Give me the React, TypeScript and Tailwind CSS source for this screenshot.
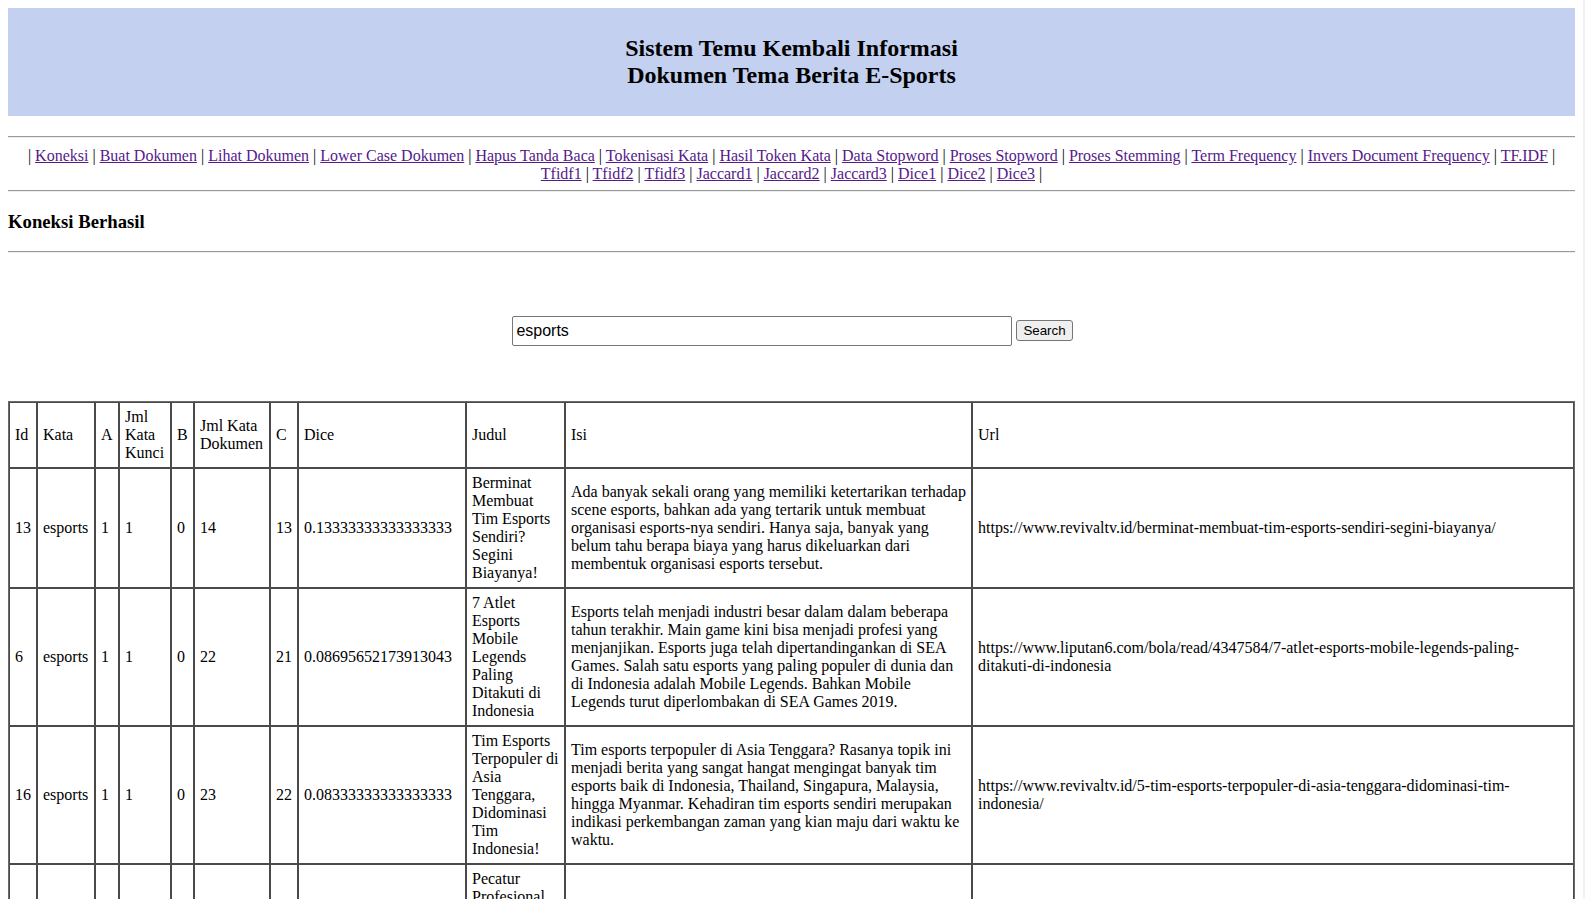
import React from "react";

type Row = {
  id: string;
  kata: string;
  a: string;
  jkk: string;
  b: string;
  jkd: string;
  c: string;
  dice: string;
  judul: string;
  isi: string;
  url: string;
};

const rows: Row[] = [
  {
    id: "13",
    kata: "esports",
    a: "1",
    jkk: "1",
    b: "0",
    jkd: "14",
    c: "13",
    dice: "0.13333333333333333",
    judul: "Berminat Membuat Tim Esports Sendiri? Segini Biayanya!",
    isi: "Ada banyak sekali orang yang memiliki ketertarikan terhadap scene esports, bahkan ada yang tertarik untuk membuat organisasi esports-nya sendiri. Hanya saja, banyak yang belum tahu berapa biaya yang harus dikeluarkan dari membentuk organisasi esports tersebut.",
    url: "https://www.revivaltv.id/berminat-membuat-tim-esports-sendiri-segini-biayanya/",
  },
  {
    id: "6",
    kata: "esports",
    a: "1",
    jkk: "1",
    b: "0",
    jkd: "22",
    c: "21",
    dice: "0.08695652173913043",
    judul: "7 Atlet Esports Mobile Legends Paling Ditakuti di Indonesia",
    isi: "Esports telah menjadi industri besar dalam dalam beberapa tahun terakhir. Main game kini bisa menjadi profesi yang menjanjikan. Esports juga telah dipertandingankan di SEA Games. Salah satu esports yang paling populer di dunia dan di Indonesia adalah Mobile Legends. Bahkan Mobile Legends turut diperlombakan di SEA Games 2019.",
    url: "https://www.liputan6.com/bola/read/4347584/7-atlet-esports-mobile-legends-paling-ditakuti-di-indonesia",
  },
  {
    id: "16",
    kata: "esports",
    a: "1",
    jkk: "1",
    b: "0",
    jkd: "23",
    c: "22",
    dice: "0.08333333333333333",
    judul: "Tim Esports Terpopuler di Asia Tenggara, Didominasi Tim Indonesia!",
    isi: "Tim esports terpopuler di Asia Tenggara? Rasanya topik ini menjadi berita yang sangat hangat mengingat banyak tim esports baik di Indonesia, Thailand, Singapura, Malaysia, hingga Myanmar. Kehadiran tim esports sendiri merupakan indikasi perkembangan zaman yang kian maju dari waktu ke waktu.",
    url: "https://www.revivaltv.id/5-tim-esports-terpopuler-di-asia-tenggara-didominasi-tim-indonesia/",
  },
  {
    id: "9",
    kata: "esports",
    a: "1",
    jkk: "1",
    b: "0",
    jkd: "26",
    c: "25",
    dice: "0.07407407407407407",
    judul: "Pecatur Profesional Indonesia Ikut Meramaikan Dunia Esports, Begini Kisah Perjalanan Mereka",
    isi: "Dunia esports kini tidak hanya diisi oleh para pemain game populer. Beberapa pecatur profesional Indonesia juga mulai meramaikan turnamen catur daring yang disiarkan secara langsung.",
    url: "https://www.revivaltv.id/pecatur-profesional-indonesia-ikut-meramaikan-dunia-esports/",
  },
];

const navLine1 = [
  "Koneksi",
  "Buat Dokumen",
  "Lihat Dokumen",
  "Lower Case Dokumen",
  "Hapus Tanda Baca",
  "Tokenisasi Kata",
  "Hasil Token Kata",
  "Data Stopword",
  "Proses Stopword",
  "Proses Stemming",
  "Term Frequency",
  "Invers Document Frequency",
  "TF.IDF",
];

const navLine2 = [
  "Tfidf1",
  "Tfidf2",
  "Tfidf3",
  "Jaccard1",
  "Jaccard2",
  "Jaccard3",
  "Dice1",
  "Dice2",
  "Dice3",
];

function NavLine({ items, leading }: { items: string[]; leading: boolean }) {
  return (
    <div>
      {leading ? "| " : ""}
      {items.map((it, i) => (
        <React.Fragment key={it}>
          <a href="#" className="text-[#551a8b] underline">
            {it}
          </a>
          {i < items.length - 1 ? " | " : " |"}
        </React.Fragment>
      ))}
    </div>
  );
}

const cell =
  "border border-[#4a4a4a] p-[5px] align-middle text-left font-normal leading-[18px]";

function Hr({ className }: { className: string }) {
  return (
    <hr
      className={
        "h-0 border-0 border-t border-b border-t-[#9a9a9a] border-b-[#eeeeee] " +
        className
      }
    />
  );
}

export default function App() {
  return (
    <div className="flex h-[899px] w-[1585px] overflow-hidden bg-white text-[16px] text-black font-['Liberation_Serif','Times_New_Roman',serif]">
      <div className="w-[1583px] shrink-0 px-2 pt-2">
        <div className="flex h-[108px] flex-col items-center justify-center bg-[#c3d0f0] text-center text-[24px] font-bold leading-[27px]">
          <div>Sistem Temu Kembali Informasi</div>
          <div>Dokumen Tema Berita E-Sports</div>
        </div>

        <Hr className="mt-[20px]" />

        <nav className="mt-[9px] text-center leading-[18px]">
          <NavLine items={navLine1} leading={true} />
          <NavLine items={navLine2} leading={false} />
        </nav>

        <Hr className="mt-[7px]" />

        <h3 className="mt-[19px] text-[18.72px] font-bold leading-[21.5px]">
          Koneksi Berhasil
        </h3>

        <Hr className="mt-[18px]" />

        <div className="mt-[63px] flex items-center justify-center gap-[4px] pl-[2px] font-['Liberation_Sans',Arial,sans-serif]">
          <input
            type="text"
            defaultValue="esports"
            className="h-[30px] w-[500px] rounded-[2px] border border-[#767676] px-[3px] text-[16px] text-black outline-none"
          />
          <button className="h-[21px] rounded-[3px] border border-[#767676] bg-[#efefef] px-[6px] text-[13.33px] leading-[15px] text-black">
            Search
          </button>
        </div>

        <table className="mt-[55px] w-full table-fixed border-separate border-spacing-0 border border-[#6a6a6a]">
          <colgroup>
            <col className="w-[28px]" />
            <col className="w-[58px]" />
            <col className="w-[24px]" />
            <col className="w-[52px]" />
            <col className="w-[23px]" />
            <col className="w-[76px]" />
            <col className="w-[28px]" />
            <col className="w-[168px]" />
            <col className="w-[99px]" />
            <col className="w-[407px]" />
            <col className="w-[602px]" />
          </colgroup>
          <thead>
            <tr>
              <td className={cell}>Id</td>
              <td className={cell}>Kata</td>
              <td className={cell}>A</td>
              <td className={cell}>Jml Kata Kunci</td>
              <td className={cell}>B</td>
              <td className={cell}>Jml Kata Dokumen</td>
              <td className={cell}>C</td>
              <td className={cell}>Dice</td>
              <td className={cell}>Judul</td>
              <td className={cell}>Isi</td>
              <td className={cell}>Url</td>
            </tr>
          </thead>
          <tbody>
            {rows.map((r) => (
              <tr key={r.id}>
                <td className={cell}>{r.id}</td>
                <td className={cell}>{r.kata}</td>
                <td className={cell}>{r.a}</td>
                <td className={cell}>{r.jkk}</td>
                <td className={cell}>{r.b}</td>
                <td className={cell}>{r.jkd}</td>
                <td className={cell}>{r.c}</td>
                <td className={cell}>{r.dice}</td>
                <td className={cell}>{r.judul}</td>
                <td className={cell}>{r.isi}</td>
                <td className={cell}>{r.url}</td>
              </tr>
            ))}
          </tbody>
        </table>
      </div>
      <div className="w-[2px] shrink-0 bg-[#f1f1f1]" />
    </div>
  );
}
